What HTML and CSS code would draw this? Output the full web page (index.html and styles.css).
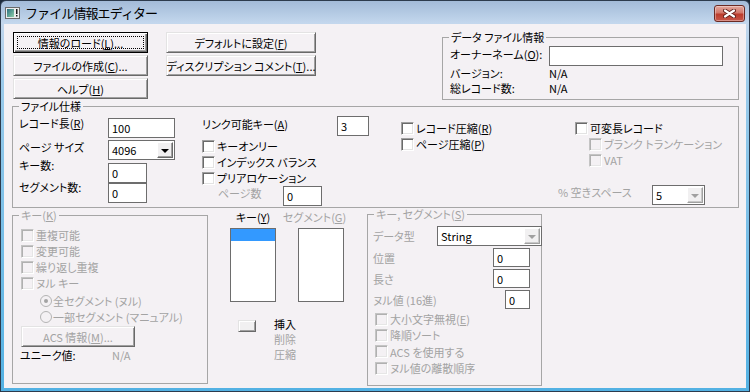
FILE: index.html
```html
<!DOCTYPE html>
<html lang="ja">
<head>
<meta charset="utf-8">
<title>ファイル情報エディター</title>
<link rel="stylesheet" href="styles.css">
</head>
<body>
<div class="window">
  <div class="titlebar">
    <svg class="appicon" width="15" height="12" viewBox="0 0 15 12">
      <defs>
        <linearGradient id="ig" x1="0" y1="0" x2="1" y2="1">
          <stop offset="0" stop-color="#2b6f80"/>
          <stop offset="1" stop-color="#8fd0a8"/>
        </linearGradient>
      </defs>
      <rect x="0.5" y="0.5" width="14" height="11" fill="#ececec" stroke="#6a6a6a"/>
      <rect x="2" y="2" width="7" height="8" fill="url(#ig)"/>
      <rect x="11" y="2" width="1.5" height="5" fill="#1a1a1a"/>
      <rect x="11" y="8" width="1.5" height="1.5" fill="#1a1a1a"/>
    </svg>
    <span class="title">ファイル情報エディター</span>
    <span class="close">
      <svg width="13" height="9" viewBox="0 0 13 9">
        <path d="M2 1.5 L11 7.5 M11 1.5 L2 7.5" stroke="#5e1e18" stroke-width="4" stroke-linecap="round"/>
        <path d="M2 1.5 L11 7.5 M11 1.5 L2 7.5" stroke="#ffffff" stroke-width="2.2" stroke-linecap="round"/>
      </svg>
    </span>
  </div>

  <div class="client">
    <div class="top">
      <div class="btncol col1">
        <div class="btn default">情報のロード(<u>L</u>)...</div>
        <div class="btn">ファイルの作成(<u>C</u>)...</div>
        <div class="btn">ヘルプ(<u>H</u>)</div>
      </div>
      <div class="btncol col2">
        <div class="btn">デフォルトに設定(<u>F</u>)</div>
        <div class="btn">ディスクリプション コメント(<u>T</u>)...</div>
      </div>
      <fieldset class="grp datainfo">
        <legend>データ ファイル情報</legend>
        <div class="di-body">
          <div class="kv owner"><span class="k">オーナーネーム(<u>O</u>):</span><span class="tb w174"></span></div>
          <div class="kv"><span class="k">バージョン:</span><span class="v">N/A</span></div>
          <div class="kv"><span class="k">総レコード数:</span><span class="v">N/A</span></div>
        </div>
      </fieldset>
    </div>

    <fieldset class="grp spec">
      <legend>ファイル仕様</legend>
      <div class="spec-body">
        <div class="colA">
          <div class="fr r1"><span class="la">レコード長(<u>R</u>)</span><span class="tb w67">100</span></div>
          <div class="fr r2"><span class="la">ページ サイズ</span><span class="dd w67"><span class="dv">4096</span><span class="ddb"><i class="tri"></i></span></span></div>
          <div class="fr r3"><span class="la">キー数:</span><span class="tb w39">0</span></div>
          <div class="fr r4"><span class="la">セグメント数:</span><span class="tb w39">0</span></div>
        </div>
        <div class="colB">
          <div class="fr rlink"><span class="lb">リンク可能キー(<u>A</u>)</span><span class="tb w32">3</span></div>
          <div class="chk"><span class="cb"></span>キーオンリー</div>
          <div class="chk"><span class="cb"></span>インデックス バランス</div>
          <div class="chk"><span class="cb"></span>プリアロケーション</div>
          <div class="fr pages"><span class="lp dis-t">ページ数</span><span class="tb w39">0</span></div>
        </div>
        <div class="colC">
          <div class="chk"><span class="cb"></span>レコード圧縮(<u>R</u>)</div>
          <div class="chk"><span class="cb"></span>ページ圧縮(<u>P</u>)</div>
        </div>
        <div class="colD">
          <div class="chk"><span class="cb"></span>可変長レコード</div>
          <div class="chk dis ind"><span class="cb"></span>ブランク トランケーション</div>
          <div class="chk dis ind"><span class="cb"></span>VAT</div>
          <div class="fr free"><span class="lf dis-t">% 空きスペース</span><span class="dd w53 dis"><span class="dv">5</span><span class="ddb"><i class="tri"></i></span></span></div>
        </div>
      </div>
    </fieldset>

    <div class="bottom">
      <fieldset class="grp keys dis-t">
        <legend>キー(<u>K</u>)</legend>
        <div class="keys-body">
          <div class="chk dis"><span class="cb"></span>重複可能</div>
          <div class="chk dis"><span class="cb"></span>変更可能</div>
          <div class="chk dis"><span class="cb"></span>繰り返し重複</div>
          <div class="chk dis"><span class="cb"></span>ヌル キー</div>
          <div class="radios">
            <div class="chk dis"><span class="rd on"></span>全セグメント (ヌル)</div>
            <div class="chk dis"><span class="rd"></span>一部セグメント (マニュアル)</div>
          </div>
          <div class="btn disbtn">ACS 情報(<u>M</u>)...</div>
          <div class="uniq"><span class="uk">ユニーク値:</span><span class="dis-t">N/A</span></div>
        </div>
      </fieldset>

      <div class="lists">
        <div class="listpair">
          <div class="listcol">
            <span class="ltitle">キー(<u>Y</u>)</span>
            <div class="lst"><div class="sel"></div></div>
          </div>
          <div class="listcol">
            <span class="ltitle dis-t seg">セグメント(<u>G</u>)</span>
            <div class="lst"></div>
          </div>
        </div>
        <div class="ops">
          <div class="minibtn"></div>
          <div class="opl">
            <span>挿入</span>
            <span class="dis-t">削除</span>
            <span class="dis-t">圧縮</span>
          </div>
        </div>
      </div>

      <fieldset class="grp kseg dis-t">
        <legend>キー, セグメント(<u>S</u>)</legend>
        <div class="kseg-body">
          <div class="kr r-type"><span class="kl">データ型</span><span class="dd w105 dis"><span class="dv blk">String</span><span class="ddb"><i class="tri"></i></span></span></div>
          <div class="kr r-pos"><span class="kl">位置</span><span class="tb w37 at493">0</span></div>
          <div class="kr r-len"><span class="kl">長さ</span><span class="tb w37 at493">0</span></div>
          <div class="kr r-null"><span class="kl">ヌル値 (16進)</span><span class="tb w25 at505">0</span></div>
          <div class="kchecks">
            <div class="chk dis"><span class="cb"></span>大小文字無視(<u>E</u>)</div>
            <div class="chk dis"><span class="cb"></span>降順ソート</div>
            <div class="chk dis"><span class="cb"></span>ACS を使用する</div>
            <div class="chk dis"><span class="cb"></span>ヌル値の離散順序</div>
          </div>
        </div>
      </fieldset>
    </div>
  </div>
</div>
</body>
</html>
```

FILE: styles.css
```css
* { box-sizing: border-box; }
html, body { margin: 0; padding: 0; }
body {
  width: 750px;
  height: 392px;
  overflow: hidden;
  background: #1d2b3b;
  font-family: "Noto Sans CJK JP", "Noto Sans", sans-serif;
  font-size: 11px;
  line-height: 14px;
  color: #000;
  font-feature-settings: "palt";
}
u { text-decoration: underline; text-underline-offset: 1px; }

.window {
  width: 750px;
  height: 392px;
  border: 1px solid #2d3b4d;
  border-radius: 6px 6px 0 0;
  background: linear-gradient(#a3bbd8 0, #c3d7ed 22px, #9ccbeb 80px, #52b1e3 100%);
  display: flex;
  flex-direction: column;
  overflow: hidden;
}

/* title bar */
.titlebar {
  flex: none;
  height: 23px;
  display: flex;
  align-items: center;
  padding-left: 4px;
}
.appicon { flex: none; margin-top: 1px; }
.title {
  margin-left: 5px;
  font-size: 13px;
  letter-spacing: -0.9px;
  font-feature-settings: normal;
  color: #000;
}
.close {
  margin-left: auto;
  margin-right: 4px;
  align-self: flex-start;
  margin-top: 4px;
  width: 31px;
  height: 17px;
  border: 1px solid #6b2a24;
  border-radius: 3px;
  background: linear-gradient(#e3a79d 0, #d2786b 45%, #bb3c2c 55%, #c8574a 100%);
  box-shadow: inset 0 0 0 1px rgba(255,255,255,0.35);
  display: flex;
  align-items: center;
  justify-content: center;
}

/* client */
.client {
  flex: none;
  width: 742px;
  height: 364px;
  margin-left: 3px;
  background: #f4f1f4;
}

.top {
  display: flex;
  align-items: flex-start;
  height: 76px;
  padding: 6px 0 0 9px;
}
.btncol { display: flex; flex-direction: column; gap: 2px; margin-top: 2px; }
.col1 { width: 135px; }
.col2 { width: 150px; margin-left: 18px; }

.btn {
  position: relative;
  height: 21px;
  display: flex;
  align-items: center;
  justify-content: center;
  white-space: nowrap;
  background: #f4f1f4;
  border: 1px solid;
  border-color: #e3e3e3 #696969 #696969 #e3e3e3;
  box-shadow: inset 1px 1px 0 #fff, inset -1px -1px 0 #a0a0a0;
}
.btn.default {
  border-color: #000;
  box-shadow: inset 1px 1px 0 #fff, inset -1px -1px 0 #696969, inset -2px -2px 0 #a0a0a0;
}
.btn.default::after {
  content: "";
  position: absolute;
  left: 3px; top: 3px; right: 3px; bottom: 3px;
  border: 1px dotted #000;
}

/* group boxes */
.grp {
  margin: 0;
  padding: 0;
  min-width: 0;
  border: 1px solid #a6a6a6;
}
.grp legend {
  padding: 0 2px;
  margin-left: 6px;
  line-height: 14px;
}

.datainfo {
  margin-left: auto;
  margin-right: 7px;
  width: 297px;
  height: 70px;
}
.di-body { padding: 2px 0 0 7px; }
.kv { display: flex; align-items: center; line-height: 15px; white-space: nowrap; }
.kv .k { width: 99px; flex: none; }
.owner { height: 20px; }
.owner .k { margin-top: -3px; }

.tb {
  display: flex;
  align-items: center;
  height: 20px;
  padding-left: 3px;
  border: 1px solid #6d6d6d;
  background: #fff;
  flex: none;
  font-feature-settings: normal;
}
.w174 { width: 174px; }
.w67 { width: 67px; }
.w53 { width: 53px; }
.w39 { width: 39px; }
.w37 { width: 37px; }
.w32 { width: 32px; }
.w25 { width: 25px; }
.w105 { width: 105px; }

.dd {
  display: flex;
  align-items: center;
  height: 20px;
  padding: 1px;
  border: 1px solid #6d6d6d;
  background: #fff;
  flex: none;
}
.dv { flex: 1; padding-left: 2px; font-feature-settings: normal; color: #000; }
.ddb {
  width: 16px;
  height: 16px;
  flex: none;
  background: #f1f0f1;
  border: 1px solid;
  border-color: #fff #696969 #696969 #fff;
  box-shadow: inset -1px -1px 0 #a0a0a0;
  display: flex;
  align-items: center;
  justify-content: center;
}
.tri {
  width: 0; height: 0;
  border-left: 4px solid transparent;
  border-right: 4px solid transparent;
  border-top: 4px solid #000;
  margin-top: 1px;
}
.dd.dis .ddb { border-color: #fff #a0a0a0 #a0a0a0 #fff; box-shadow: inset -1px -1px 0 #c8c8c8; }
.dd.dis .tri { border-top-color: #a0a0a0; }

/* file spec */
.spec {
  margin: -1px 7px 0 8px;
  height: 109px;
}
.spec-body {
  display: flex;
  align-items: flex-start;
  padding: 3px 0 0 6px;
}
.fr { display: flex; align-items: flex-start; }
.colA { width: 156px; margin-top: 2px; flex: none; }
.colA .la { width: 89px; flex: none; white-space: nowrap; }
.colA .r1 { height: 22px; }
.colA .r2 { height: 23px; }
.colA .r3 { height: 20px; }
.colA .r4 { height: 20px; }
.colA .r1 .la { margin-top: -2px; }
.colA .r2 .la { margin-top: 0; }
.colA .r3 .la { margin-top: -5px; }
.colA .r4 .la { margin-top: -3px; }

.colB { width: 167px; margin-left: 27px; flex: none; }
.rlink { height: 22px; }
.rlink .lb { width: 135px; padding-top: 1px; flex: none; }
.pages { padding-left: 16px; }
.pages .lp { width: 65px; flex: none; line-height: 12px; padding-top: 1px; }

.colC { width: 174px; margin-left: 32px; margin-top: 4px; flex: none; }
.colD { margin-top: 4px; flex: none; }
.ind { padding-left: 14px; }
.free { margin: 17px 0 0 -17px; }
.free .lf { width: 94px; flex: none; padding-top: 0; }

/* checkboxes / radios */
.chk {
  display: flex;
  align-items: center;
  height: 16px;
  white-space: nowrap;
}
.cb {
  width: 13px;
  height: 13px;
  flex: none;
  margin-right: 2px;
  background: #fff;
  border: 1px solid;
  border-color: #a0a0a0 #fff #fff #a0a0a0;
  box-shadow: inset 1px 1px 0 #6a6a6a, inset -1px -1px 0 #e3e3e3;
}
.chk.dis { color: #a3a3a3; }
.chk.dis .cb {
  background: #f4f1f4;
  border-color: #c4c4c4 #fff #fff #c4c4c4;
  box-shadow: inset 1px 1px 0 #b0b0b0, inset -1px -1px 0 #e6e6e6;
}
.rd {
  position: relative;
  width: 12px;
  height: 12px;
  flex: none;
  margin-right: 1px;
  border-radius: 50%;
  border: 1px solid #b4b4b4;
  background: #f4f1f4;
}
.rd.on::after {
  content: "";
  position: absolute;
  left: 3px; top: 3px;
  width: 4px; height: 4px;
  border-radius: 50%;
  background: #a3a3a3;
}
.dis-t { color: #a3a3a3; }

/* bottom */
.bottom {
  display: flex;
  align-items: flex-start;
  margin-top: -1px;
}
.keys {
  margin: 1px 0 0 8px;
  width: 196px;
  height: 176px;
}
.keys-body { padding: 5px 0 0 8px; }
.radios { margin-top: 2px; padding-left: 19px; }
.disbtn { width: 114px; margin-top: 1px; color: #a3a3a3; }
.uniq { display: flex; color: #000; margin-left: -1px; padding-top: 1px; }
.uniq .uk { width: 92px; flex: none; }

.lists { margin: 3px 0 0 22px; width: 114px; flex: none; }
.listpair { display: flex; gap: 22px; }
.listcol { display: flex; flex-direction: column; align-items: center; width: 46px; }
.ltitle { white-space: nowrap; line-height: 14px; }
.ltitle.seg { margin-right: 13px; }
.lst {
  margin-top: 4px;
  width: 46px;
  height: 74px;
  border: 1px solid #6d6d6d;
  background: #fff;
}
.sel { height: 12px; background: #3399ff; }
.ops { display: flex; align-items: flex-start; margin-top: 15px; }
.minibtn {
  width: 18px;
  height: 12px;
  margin: 3px 0 0 8px;
  background: #f1f0f1;
  border: 1px solid;
  border-color: #e3e3e3 #696969 #696969 #e3e3e3;
  box-shadow: inset 1px 1px 0 #fff, inset -1px -1px 0 #a0a0a0;
}
.opl { display: flex; flex-direction: column; margin-left: 18px; line-height: 15px; }

.kseg {
  margin-left: 23px;
  width: 175px;
  height: 179px;
}
.kseg-body { padding: 5px 0 0 5px; }
.kr { display: flex; align-items: center; }
.kl { width: 64px; flex: none; white-space: nowrap; }
.r-type { height: 20px; }
.r-pos, .r-len, .r-null { margin-top: 2px; }
.r-pos .tb, .r-len .tb, .r-null .tb { height: 19px; }
.at493 { margin-left: 56px; }
.at505 { margin-left: 68px; }
.kr .tb { color: #000; }
.blk { color: #000; }
.kchecks { margin-top: 2px; padding-left: 2px; }
.kchecks .chk { height: 16.3px; }
```
